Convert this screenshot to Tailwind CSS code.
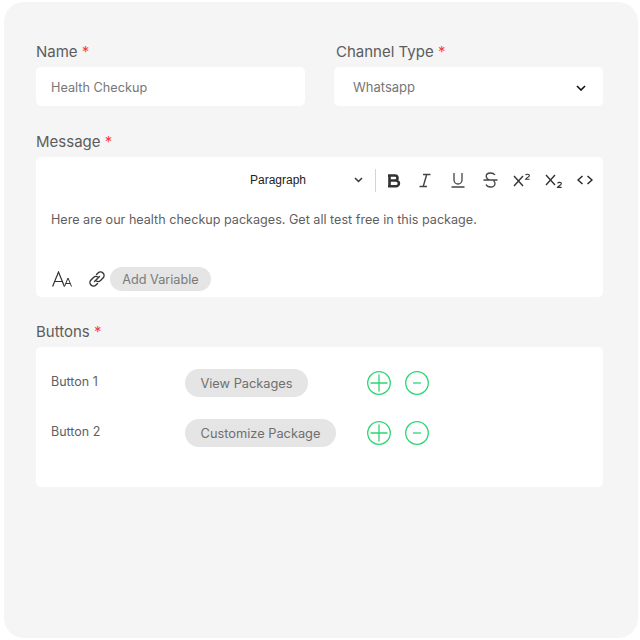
<!DOCTYPE html>
<html>
<head>
<meta charset="utf-8">
<script src="https://cdn.jsdelivr.net/npm/@tailwindcss/browser@4"></script>
</head>
<body class="bg-white">
<div class="w-[640px] h-[640px] pt-[2px] pl-[4px] pr-[2px] pb-[2px] font-['Inter',sans-serif]">
  <div class="w-[634px] h-[636px] bg-[#f5f5f5] rounded-[20px] pl-[32px] pt-[39px]">
    <div class="flex gap-[29px] w-[567px]">
      <div class="w-[269px]">
        <div class="h-[20px] leading-[22px] text-[15px] text-[#5c5c5c] mb-[6px]">Name <span class="text-[#ff3b3b]">*</span></div>
        <div class="h-[39px] bg-white rounded-[5px] pl-[15px] pt-[2px] flex items-center text-[12.700px] text-[#777777]">Health Checkup</div>
      </div>
      <div class="w-[269px]">
        <div class="h-[20px] leading-[22px] text-[15px] text-[#5c5c5c] mb-[6px] pl-[2px]">Channel Type <span class="text-[#ff3b3b]">*</span></div>
        <div class="h-[39px] bg-white rounded-[5px] pl-[19px] pr-[17px] pt-[2px] flex items-center justify-between text-[13px] text-[#777777]">
          <span>Whatsapp</span>
          <svg width="10" height="6" viewBox="0 0 10 6" fill="none" stroke="#111" stroke-width="1.600"><path d="M1 1l4 4 4-4"/></svg>
        </div>
      </div>
    </div>

    <div class="h-[20px] leading-[22px] text-[15px] text-[#5c5c5c] mt-[25px] mb-[6px]">Message <span class="text-[#ff3b3b]">*</span></div>
    <div class="w-[567px] h-[140px] bg-white rounded-[5px] flex flex-col">
      <div class="h-[46px] pl-[214px] flex items-center">
        <span class="w-[104px] text-[12px] text-[#222222] font-['Liberation_Sans',sans-serif]">Paragraph</span>
        <svg width="9" height="6" viewBox="0 0 9 6" fill="none" stroke="#333" stroke-width="1.500"><path d="M1 1l3.500 3.500L8 1"/></svg>
        <div class="w-px h-[23px] bg-[#d4d4d4] ml-[12px] mr-[11px]"></div>
        <svg class="mr-[18px]" width="14" height="15" viewBox="0 0 14 15" fill="none" stroke="#333" stroke-width="2.600"><path d="M2.500 1.500v12M1 2.500h7a2.500 2.500 0 0 1 0 5H2.500M2.500 7.500H9a2.800 2.800 0 0 1 0 5.800H1"/></svg>
        <svg class="mr-[20px]" width="12" height="15" viewBox="0 0 12 15" fill="none" stroke="#444" stroke-width="1.400"><path d="M4 1.500h7.500M.5 13.500H8M7.700 1.500L4.200 13.500"/></svg>
        <svg class="mr-[18px]" width="14" height="16" viewBox="0 0 14 16" fill="none" stroke="#444" stroke-width="1.300"><path d="M3 1v7a4 4 0 0 0 8 0V1M.5 15h13"/></svg>
        <svg class="mr-[15px]" width="15" height="16" viewBox="0 0 15 16" fill="none" stroke="#444" stroke-width="1.300"><path d="M12 3C11 1.500 9.500 1 7.500 1 5 1 3.200 2.300 3.200 4.300c0 1.500 1 2.700 3 3.700M.5 8h14M10.500 8.800c1 .7 1.500 1.500 1.500 2.700 0 2-1.800 3.500-4.500 3.500-2 0-3.700-.8-4.500-2.500"/></svg>
        <svg class="mr-[14px]" width="18" height="14" viewBox="0 0 18 14" fill="none" stroke="#333" stroke-width="1.400"><path d="M1 3l9 10M10 3L1 13"/><path stroke-width="1.100" d="M12.600 2.200C13 .8 16.600.8 16.400 2.600c-.1 1.200-2.800 2-3.800 3.600h4"/></svg>
        <svg class="mr-[14px] mt-[3px]" width="18" height="15" viewBox="0 0 18 15" fill="none" stroke="#333" stroke-width="1.400"><path d="M1 1l9 10M10 1L1 11"/><path stroke-width="1.100" d="M12.600 9.400c.4-1.400 4-1.400 3.800.4-.1 1.200-2.800 2-3.800 3.600h4"/></svg>
        <svg width="16" height="10" viewBox="0 0 16 10" fill="none" stroke="#222" stroke-width="1.400"><path d="M5.500 1L1 5l4.500 4M10.500 1L15 5l-4.500 4"/></svg>
      </div>
      <div class="pl-[15px] mt-[7px] text-[12.600px] leading-[20px] text-[#5f5f5f] flex-1">Here are our health checkup packages. Get all test free in this package.</div>
      <div class="h-[30px] mb-[3px] pl-[16px] flex items-center">
        <svg class="mr-[16px]" width="21" height="16" viewBox="0 0 21 16" fill="none" stroke="#333" stroke-width="1.200"><path d="M.6 15.500L6.500 1l5.900 14.500M2.500 10.500h8"/><path stroke-width="1" d="M12.500 15.500L16 7l3.500 8.500M13.800 12.500h4.400"/></svg>
        <svg class="mr-[5px]" width="16" height="16" viewBox="0 0 16 16" fill="none" stroke="#333" stroke-width="1.400" stroke-linecap="round"><path d="M7.500 3.500l1.500-1.500a3.500 3.500 0 0 1 5 5l-2.500 2.500a3.500 3.500 0 0 1-4 .7"/><path d="M8.500 12.500L7 14a3.500 3.500 0 0 1-5-5l2.500-2.500a3.500 3.500 0 0 1 4-.7"/><path d="M5.500 10.500l5-5"/></svg>
        <div class="h-[24px] w-[101px] rounded-full bg-[#e5e5e5] flex items-center justify-center pt-[1px] text-[12.700px] text-[#7a7a7a]">Add Variable</div>
      </div>
    </div>

    <div class="h-[20px] leading-[22px] text-[15px] text-[#5c5c5c] mt-[24px] mb-[6px]">Buttons <span class="text-[#ff3b3b]">*</span></div>
    <div class="w-[567px] h-[140px] bg-white rounded-[5px] pl-[15px] pt-[22px] flex flex-col gap-[22px]">
      <div class="flex items-center h-[28px]">
        <span class="w-[134px] text-[12.500px] text-[#5f5f5f] -mt-[1px]">Button 1</span>
        <div class="h-[28px] w-[123px] rounded-full bg-[#e5e5e5] flex items-center justify-center pt-[1px] text-[12.800px] text-[#6f6f6f]">View Packages</div>
        <svg class="ml-[59px]" width="24" height="24" viewBox="0 0 24 24" fill="none" stroke="#2ed573" stroke-width="1.300"><circle cx="12" cy="12" r="11.300"/><path d="M12 3.500v17M3.500 12h17"/></svg>
        <svg class="ml-[14px]" width="24" height="24" viewBox="0 0 24 24" fill="none" stroke="#2ed573" stroke-width="1.300"><circle cx="12" cy="12" r="11.300"/><path d="M8 12h8"/></svg>
      </div>
      <div class="flex items-center h-[28px]">
        <span class="w-[134px] text-[12.500px] text-[#5f5f5f] -mt-[1px]">Button 2</span>
        <div class="h-[28px] w-[151px] rounded-full bg-[#e5e5e5] flex items-center justify-center pt-[1px] text-[12.800px] text-[#6f6f6f]">Customize Package</div>
        <svg class="ml-[31px]" width="24" height="24" viewBox="0 0 24 24" fill="none" stroke="#2ed573" stroke-width="1.300"><circle cx="12" cy="12" r="11.300"/><path d="M12 3.500v17M3.500 12h17"/></svg>
        <svg class="ml-[14px]" width="24" height="24" viewBox="0 0 24 24" fill="none" stroke="#2ed573" stroke-width="1.300"><circle cx="12" cy="12" r="11.300"/><path d="M8 12h8"/></svg>
      </div>
    </div>
  </div>
</div>
</body>
</html>
